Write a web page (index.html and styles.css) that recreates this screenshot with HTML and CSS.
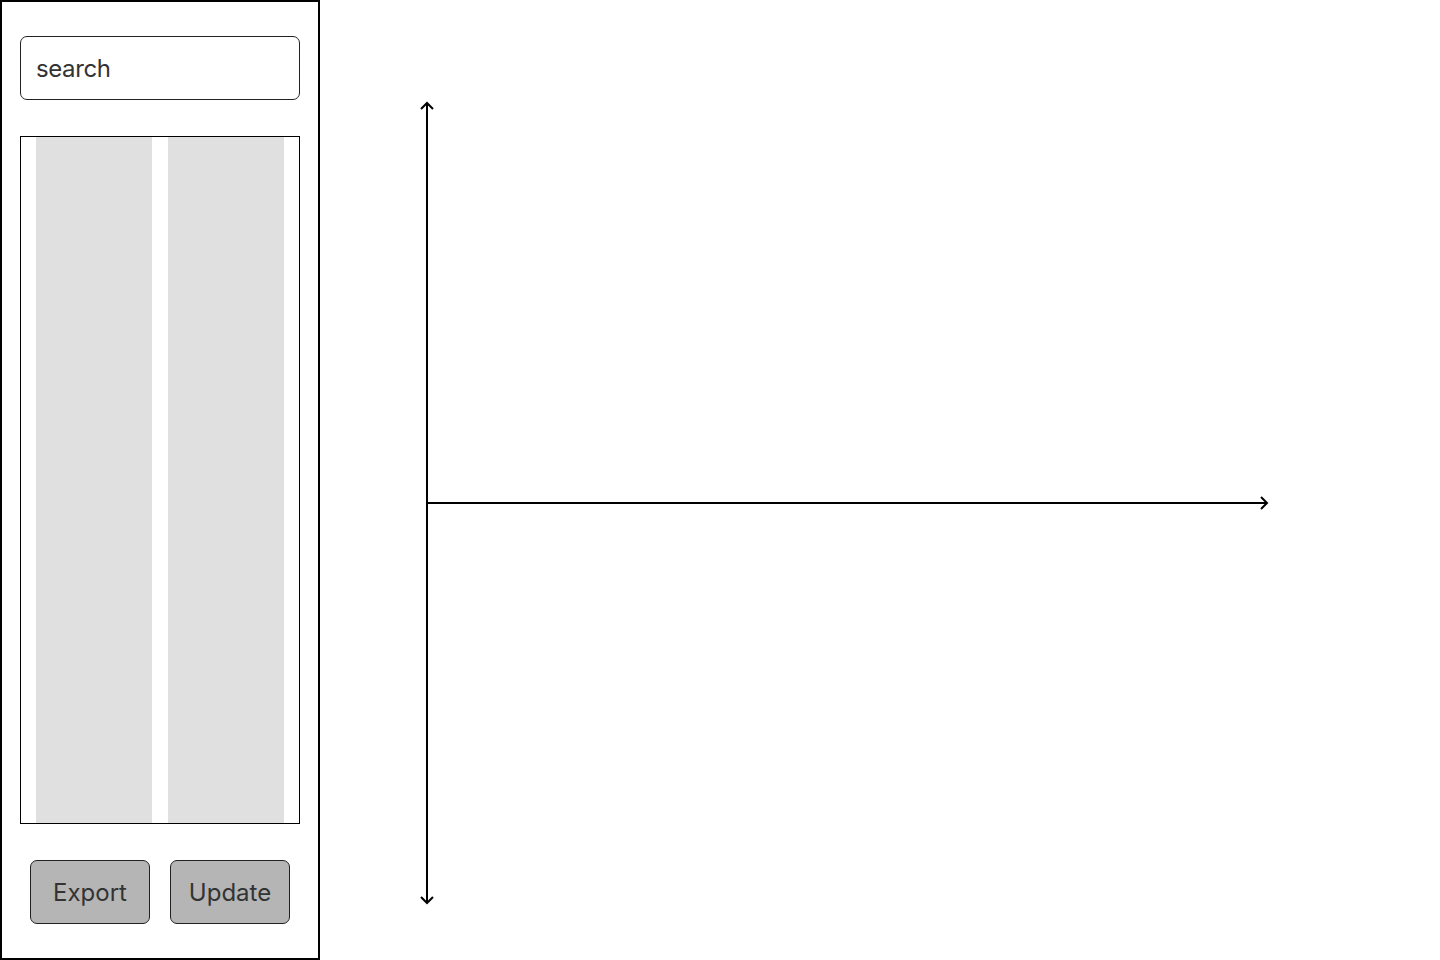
FILE: index.html
```html
<!DOCTYPE html>
<html lang="en">
  <head>
    <meta charset="UTF-8" />
    <meta name="viewport" content="width=device-width, initial-scale=1.0" />
    <title>Chart</title>
    <link rel="stylesheet" href="styles.css">
  </head>
  <body>
    <aside class="sidebar">
      <div class="search">search</div>
      <div class="list">
        <div class="list-col"></div>
        <div class="list-col"></div>
      </div>
      <div class="actions">
        <button class="btn" type="button">Export</button>
        <button class="btn" type="button">Update</button>
      </div>
    </aside>
    <main class="chart">
      <svg class="axes" width="1120" height="960" viewBox="0 0 1120 960">
        <g fill="none" stroke="#000" stroke-width="2">
          <!-- y axis -->
          <line x1="107" y1="103" x2="107" y2="903" />
          <polyline points="101,109 107,103 113,109" />
          <polyline points="101,897 107,903 113,897" />
          <!-- x axis -->
          <line x1="107" y1="503" x2="947" y2="503" />
          <polyline points="941,497 947,503 941,509" />
        </g>
      </svg>
    </main>
  </body>
</html>
```

FILE: styles.css
```css
* {
  box-sizing: border-box;
}

body {
  margin: 0;
  display: flex;
  width: 1440px;
  height: 960px;
  background: #fff;
  font-family: Inter, "Noto Sans", sans-serif;
  color: #333;
  overflow: hidden;
}

.sidebar {
  width: 320px;
  height: 960px;
  border: 2px solid #000;
  padding: 34px 18px 34px 18px;
  display: flex;
  flex-direction: column;
}

.search {
  height: 64px;
  border: 1px solid #222;
  border-radius: 7px;
  padding: 0 15px;
  display: flex;
  align-items: center;
  font-size: 24px;
  letter-spacing: -0.4px;
  color: #333;
}

.list {
  margin-top: 36px;
  height: 688px;
  border: 1px solid #000;
  padding: 0 15px;
  display: flex;
  gap: 16px;
}

.list-col {
  flex: 1;
  background: #e0e0e0;
}

.actions {
  margin-top: 36px;
  display: flex;
  justify-content: center;
  gap: 20px;
}

.btn {
  width: 120px;
  height: 64px;
  background: #b5b5b5;
  border: 1px solid #222;
  border-radius: 7px;
  font-family: inherit;
  font-size: 24px;
  color: #333;
  padding: 0;
  cursor: pointer;
}

.chart {
  flex: 1;
  position: relative;
}

.axes {
  display: block;
}
```
